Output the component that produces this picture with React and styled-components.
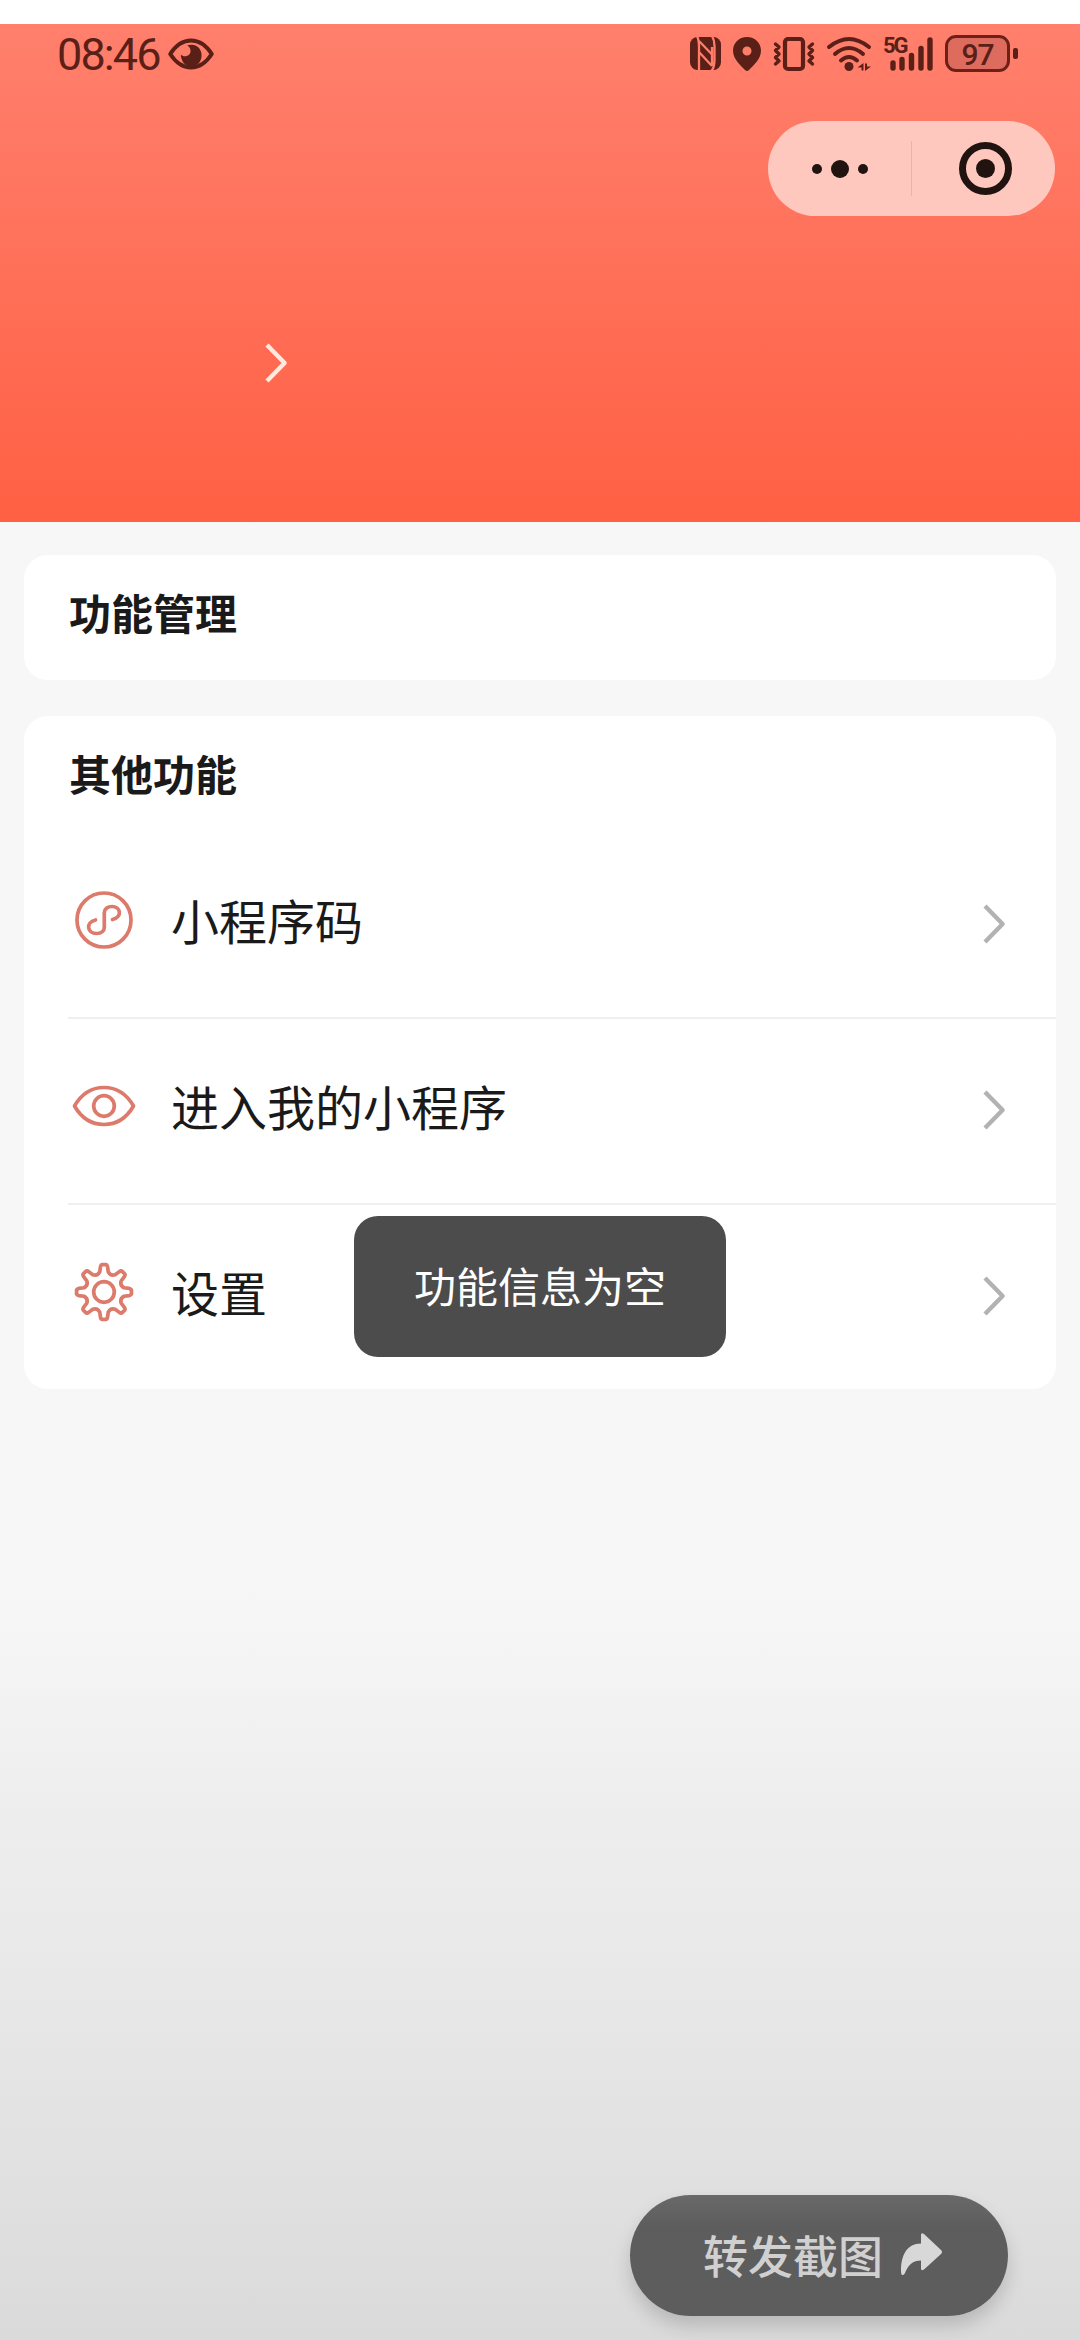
import React from "react";
import styled, { createGlobalStyle } from "styled-components";

const INK = "#5a2018";
const ACCENT = "#dc7a6b";

const GlobalStyle = createGlobalStyle`
  * { box-sizing: border-box; }
  body {
    margin: 0;
    background: #fff;
    font-family: "Noto Sans CJK SC", "Noto Sans", sans-serif;
    color: #1a1a1a;
  }
  svg { display: block; flex: none; overflow: visible; }
`;

const Page = styled.div`
  position: relative;
  width: 1080px;
  height: 2340px;
  overflow: hidden;
  background: linear-gradient(180deg, #f7f7f7 0, #f7f7f7 1580px, #f4f4f4 1670px, #eeeeee 1800px, #e8e8e8 1990px, #dadada 2340px);
`;

const TopGap = styled.div`
  height: 24px;
  background: #fff;
`;

const Header = styled.header`
  display: flex;
  flex-direction: column;
  height: 498px;
  background: linear-gradient(180deg, #ff806d 0%, #ff6044 100%);
`;

const StatusBar = styled.div`
  display: flex;
  justify-content: space-between;
  align-items: flex-start;
  height: 97px;
  padding: 11px 62px 0 57px;
  color: ${INK};
`;

const StatusGroup = styled.div`
  display: flex;
  align-items: center;
  height: 37px;
  gap: ${(p) => p.$gap || 0}px;
`;

const Clock = styled.span`
  width: 111px;
  padding-top: 2px;
  font: 400 45px/37px Roboto, sans-serif;
  letter-spacing: -1.9px;
  white-space: nowrap;
`;

const Signal = styled.div`
  position: relative;
  width: 50px;
  height: 34px;
`;

const Network = styled.span`
  position: absolute;
  left: 0;
  top: 0;
  font: 700 22px/17px Roboto, sans-serif;
  letter-spacing: -2px;
`;

const Battery = styled.div`
  display: flex;
  align-items: center;
  gap: 3px;

  &::after {
    content: "";
    width: 5px;
    height: 11px;
    border-radius: 2px;
    background: ${INK};
  }
`;

const BatteryBody = styled.div`
  width: 65px;
  height: 37px;
  border: 3px solid #6d2018;
  border-radius: 11px;
  background: #dd6b5e;
  font: 500 30px/33px Roboto, sans-serif;
  letter-spacing: -1px;
  text-align: center;
`;

const Capsule = styled.div`
  display: grid;
  grid-template-columns: 143px 1px 143px;
  align-items: center;
  justify-items: center;
  align-self: flex-end;
  width: 287px;
  height: 95px;
  margin-right: 25px;
  border-radius: 48px;
  background: #ffc8bf;
`;

const CapsuleDivider = styled.span`
  width: 1px;
  height: 55px;
  background: #eeb0a8;
`;

const TargetSlot = styled.span`
  padding-left: 4px;
`;

const Profile = styled.div`
  display: flex;
  align-items: center;
  height: 100px;
  margin-top: 97px;
  padding-left: 265px;
`;

const Content = styled.main`
  display: flex;
  flex-direction: column;
  gap: 36px;
  padding: 33px 24px 0;
`;

const Card = styled.section`
  height: ${(p) => p.$height}px;
  border-radius: 24px;
  background: #fff;
`;

const CardTitle = styled.h2`
  margin: 0;
  padding: 26px 0 0 45px;
  font-size: 42px;
  font-weight: 700;
  line-height: 62px;
  height: ${(p) => p.$height || 116}px;
`;

const Row = styled.div`
  display: flex;
  align-items: center;
  height: 186px;
  margin-left: 44px;
  padding: 0 50px 2px 3px;
  border-bottom: ${(p) => (p.$last ? "2px solid transparent" : "2px solid #efefef")};
`;

const RowIcon = styled.span`
  padding-bottom: 8px;
`;

const RowLabel = styled.span`
  flex: 1;
  padding: 0 0 10px 34px;
  font-size: 48px;
  line-height: 70px;
  font-weight: 400;
`;

const Toast = styled.div`
  position: absolute;
  left: 354px;
  top: 1216px;
  width: 372px;
  height: 141px;
  border-radius: 24px;
  background: #4c4c4c;
  color: #fff;
  font-size: 42px;
  line-height: 137px;
  text-align: center;
`;

const ShareButton = styled.button`
  position: absolute;
  left: 630px;
  top: 2195px;
  display: flex;
  align-items: center;
  gap: 18px;
  width: 378px;
  height: 121px;
  padding: 0 0 2px 73px;
  border: 0;
  border-radius: 61px;
  background: linear-gradient(180deg, #696969 0, #5d5d5d 32px);
  box-shadow: 0 10px 18px rgba(0, 0, 0, 0.16);
  color: #d0d0d0;
  font: 500 45px/66px "Noto Sans CJK SC", sans-serif;
`;

const Chevron = ({ color }) => (
  <svg width="23" height="40" viewBox="0 0 23 40" fill="none" stroke={color} strokeWidth="4.400">
    <path d="M2 2 L19.6 20 L2 38" strokeLinejoin="round" />
  </svg>
);

const StatusEye = () => (
  <svg width="46" height="32" viewBox="0 0 46 32">
    <path d="M2.2 16 Q11 2.5 23 2.5 T43.8 16 Q35 29.500 23 29.500 T2.200 16Z" fill="none" stroke={INK} strokeWidth="4" strokeLinejoin="round" />
    <path d="M19 7.500 C29 4.500 34.500 12 33.500 19 C33 24 29 28.500 23 28.500 C17 28.500 13 23 12.800 16.500 C16 20 23 18 22.500 12.500 C22.400 10 21 8.500 19 7.500Z" fill={INK} />
  </svg>
);

const NfcIcon = () => (
  <svg width="31" height="33" viewBox="0 0 31 33">
    <rect width="31" height="33" rx="7.500" fill={INK} />
    <path d="M9 34 V10 Q9 3 7 -1 M9 4 L22 17.500 M9 15 L22 29 M22 29 V10 M22 -1 Q24.500 3 24.500 9 V23 Q24.500 30 21.500 34" fill="none" stroke="#ff7d69" strokeWidth="2.300" />
  </svg>
);

const PinIcon = () => (
  <svg width="28" height="34" viewBox="0 0 28 34">
    <path fillRule="evenodd" d="M14 0 C22 0 28 6 28 13.500 C28 22 21 28 16 33 Q14 35 12 33 C7 28 0 22 0 13.500 C0 6 6 0 14 0Z M14 9.500 a4.500 4.500 0 1 0 0 9 a4.500 4.500 0 1 0 0 -9Z" fill={INK} />
  </svg>
);

const VibrateIcon = () => (
  <svg width="42" height="34" viewBox="0 0 42 34" fill="none" stroke={INK} strokeLinejoin="round" strokeLinecap="round">
    <rect x="12" y="2" width="18" height="30" rx="3" strokeWidth="4.200" />
    <path d="M2.500 7 L6 10 L2.500 13.500 L6 17 L2.500 20.500 L6 24 L2.500 27 M39.500 7 L36 10 L39.500 13.500 L36 17 L39.500 20.500 L36 24 L39.500 27" strokeWidth="3.400" />
  </svg>
);

const WifiIcon = () => (
  <svg width="44" height="34" viewBox="0 0 44 34" fill="none" stroke={INK} strokeWidth="4" strokeLinecap="round">
    <path d="M2 10 Q22 -6 42 10 M8 17 Q22 5 36 17 M14 23.500 Q22 16.500 30 23.500" />
    <circle cx="22" cy="29.500" r="4.500" fill={INK} stroke="none" />
    <path d="M30.500 30.500 L36.500 26 V33.500 H34.500 V30.500Z M44 29.500 L38 34 V26.500 H40 V29.500Z" fill={INK} stroke="none" />
  </svg>
);

const SignalBars = () => (
  <svg width="51" height="34" viewBox="0 0 51 34" stroke={INK} strokeWidth="5.400" strokeLinecap="round">
    <path d="M10 26 V31 M19 22.500 V31 M28.500 18.500 V31 M38 11.500 V31 M47 3 V31" />
  </svg>
);

const DotsIcon = () => (
  <svg width="56" height="18" viewBox="0 0 56 18" fill="#21130f">
    <circle cx="5" cy="9" r="5" />
    <circle cx="28" cy="9" r="9" />
    <circle cx="51" cy="9" r="5" />
  </svg>
);

const TargetIcon = () => (
  <svg width="53" height="53" viewBox="0 0 53 53">
    <circle cx="26.500" cy="26.500" r="23" fill="none" stroke="#21130f" strokeWidth="7" />
    <circle cx="26.500" cy="26.500" r="9.500" fill="#21130f" />
  </svg>
);

const MiniProgramIcon = () => (
  <svg width="66" height="60" viewBox="-33 -30 66 60" fill="none" stroke={ACCENT} strokeWidth="3.700" strokeLinecap="round">
    <circle r="27" />
    <path d="M8.500 -0.500 C19 -3 16.500 -13.500 8 -13.500 C3.500 -13.500 0.300 -11 0.300 -7.500 V7.500 C0.300 11 -3 13.500 -7.500 13.500 C-16.500 13.500 -19 2.500 -8.500 0" />
  </svg>
);

const EyeIcon = () => (
  <svg width="66" height="60" viewBox="-33 -30 66 60" fill="none" stroke={ACCENT} strokeWidth="3.700" strokeLinejoin="round">
    <path d="M-29.500 0 C-22 -13 -11 -18.500 0 -18.500 S22 -13 29.500 0 C22 13 11 18.500 0 18.500 S-22 13 -29.500 0Z" />
    <circle r="10.300" />
  </svg>
);

const TOOTH_COUNT = 8;
const gearPath = Array.from({ length: TOOTH_COUNT }, (_, i) => {
  const at = (deg, r) => {
    const a = ((i * 45 + deg - 90) * Math.PI) / 180;
    return `${(Math.cos(a) * r).toFixed(2)} ${(Math.sin(a) * r).toFixed(2)}`;
  };
  return `${i ? "L" : "M"}${at(-12, 20.5)} L${at(-8, 25.5)} Q${at(-6.5, 27.5)} ${at(-3.5, 27.5)} L${at(3.5, 27.5)} Q${at(6.5, 27.5)} ${at(8, 25.5)} L${at(12, 20.5)} Q${at(22.5, 17)} ${at(33, 20.5)}`;
}).join(" ") + "Z";

const GearIcon = () => (
  <svg width="66" height="60" viewBox="-33 -30 66 60" fill="none" stroke={ACCENT} strokeWidth="3.700" strokeLinejoin="round">
    <path d={gearPath} />
    <circle r="10.300" />
  </svg>
);

const ForwardIcon = () => (
  <svg width="42" height="43" viewBox="0 0 42 43" fill="#d8d8d8">
    <path d="M20 2 Q20 -1 23 1 L40 17 Q42 19 40 21 L23 36.500 Q20 38.500 20 35.500 V27.500 C12 27.500 7 32 4 40 Q3 42.500 1 42 Q0 41 0 38 C0 22 6 10.500 20 10.500Z" />
  </svg>
);

const MENU = [
  { label: "小程序码", Icon: MiniProgramIcon },
  { label: "进入我的小程序", Icon: EyeIcon },
  { label: "设置", Icon: GearIcon },
];

export default function App() {
  return (
    <Page>
      <GlobalStyle />
      <TopGap />
      <Header>
        <StatusBar>
          <StatusGroup>
            <Clock>08:46</Clock>
            <StatusEye />
          </StatusGroup>
          <StatusGroup $gap={12}>
            <NfcIcon />
            <PinIcon />
            <VibrateIcon />
            <WifiIcon />
            <Signal>
              <SignalBars />
              <Network>5G</Network>
            </Signal>
            <Battery>
              <BatteryBody>97</BatteryBody>
            </Battery>
          </StatusGroup>
        </StatusBar>
        <Capsule>
          <DotsIcon />
          <CapsuleDivider />
          <TargetSlot>
            <TargetIcon />
          </TargetSlot>
        </Capsule>
        <Profile>
          <Chevron color="#ffe9df" />
        </Profile>
      </Header>
      <Content>
        <Card $height={125}>
          <CardTitle>功能管理</CardTitle>
        </Card>
        <Card $height={673}>
          <CardTitle $height={117}>其他功能</CardTitle>
          {MENU.map(({ label, Icon }, i) => (
            <Row key={label} $last={i === MENU.length - 1}>
              <RowIcon>
                <Icon />
              </RowIcon>
              <RowLabel>{label}</RowLabel>
              <Chevron color="#b2b2b2" />
            </Row>
          ))}
        </Card>
      </Content>
      <Toast>功能信息为空</Toast>
      <ShareButton>
        转发截图
        <ForwardIcon />
      </ShareButton>
    </Page>
  );
}
